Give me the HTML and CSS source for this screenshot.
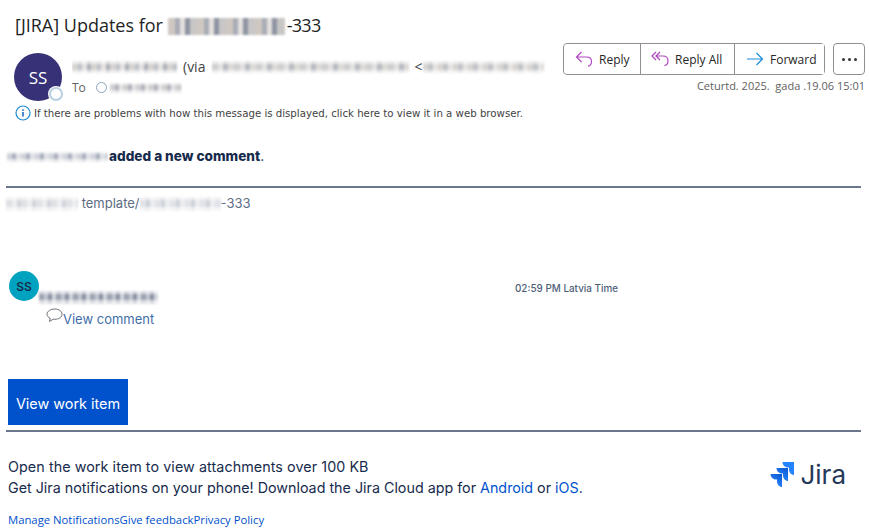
FILE: index.html
```html
<!DOCTYPE html>
<html lang="en">
<head>
<meta charset="utf-8">
<title>[JIRA] Updates</title>
<link rel="stylesheet" href="styles.css">
</head>
<body>
<header class="msg-head">
  <h1 class="subject">[JIRA] Updates for <span class="mask mask-subject"></span><span class="num">-333</span></h1>
  <div class="head-row">
    <div class="avatar-wrap">
      <div class="avatar">SS</div>
      <span class="presence"></span>
    </div>
    <div class="people">
      <div class="from"><span class="mask mask-from"></span><span class="via">(via</span><span class="mask mask-via"></span><span class="lt">&lt;</span><span class="mask mask-addr"></span></div>
      <div class="to">To <span class="to-dot"></span><span class="mask mask-to"></span></div>
    </div>
    <div class="actions">
      <div class="action-top">
        <div class="btn-group">
          <button class="act act-reply">
            <svg width="18" height="18" viewBox="0 0 18 18" fill="none" stroke="#b146c2" stroke-width="1.200"><path d="M6.500 2 1.500 7 6.500 12M1.500 7H11.500C14.500 7 16.500 9 16.500 11.700C16.500 13.700 15 15.700 13 16.200"/></svg>
            Reply</button>
          <button class="act act-all">
            <svg width="18" height="18" viewBox="0 0 18 18" fill="none" stroke="#b146c2" stroke-width="1.200"><path d="M5 2 1 6 5 10M9 2 5 6 9 10M5 6H12C15 6 17 8 17 11C17 13 15.500 15.200 13.500 15.700"/></svg>
            Reply All</button>
          <button class="act act-fwd">
            <svg width="18" height="18" viewBox="0 0 18 18" fill="none" stroke="#1b8bd6" stroke-width="1.200"><path d="M1 9H16.500M10.500 3 16.500 9 10.500 15"/></svg>
            Forward</button>
        </div>
        <button class="more" aria-label="More"><span></span><span></span><span></span></button>
      </div>
      <div class="date">Ceturtd. 2025.&nbsp; gada .19.06 15:01</div>
    </div>
  </div>
  <div class="infobar">
    <svg width="16" height="16" viewBox="0 0 16 16"><circle cx="8" cy="8" r="7" fill="none" stroke="#1b8bd6" stroke-width="1.200"/><rect x="7.200" y="7" width="1.600" height="4.500" fill="#1b6ec2"/><rect x="7.200" y="4.300" width="1.600" height="1.600" fill="#1b6ec2"/></svg>
    <span>If there are problems with how this message is displayed, click here to view it in a web browser.</span>
  </div>
</header>

<main class="mail">
  <p class="headline"><span class="mask mask-actor"></span><strong>added a new comment</strong>.</p>
  <hr class="rule">
  <p class="crumb"><span class="mask mask-project"></span> template/<span class="mask mask-key"></span>-333</p>

  <section class="comment">
    <div class="c-avatar">SS</div>
    <div class="c-time">02:59 PM Latvia Time</div>
    <div class="mask mask-name"></div>
    <a class="c-link" href="#">
      <svg class="c-icon" width="17" height="15" viewBox="0 0 17 15" fill="none" stroke="#6b6f76" stroke-width="1"><path d="M8.800 1C4.500 1 1 3.300 1 6.200C1 8 2.300 9.500 4.200 10.300L3.500 13.500L7.200 11.200C7.700 11.300 8.300 11.300 8.800 11.300C13 11.300 16 9 16 6.200C16 3.300 13 1 8.800 1Z"/></svg>View comment</a>
  </section>

  <a class="cta" href="#">View work item</a>
  <hr class="rule rule-low">

  <footer class="foot">
    <div class="foot-row">
      <div class="foot-text">
        <p class="foot-first">Open the work item to view attachments over 100 KB</p>
        <p>Get Jira notifications on your phone! Download the Jira Cloud app for <a href="#">Android</a> or <a href="#">iOS</a>.</p>
      </div>
      <div class="logo">
        <svg width="26" height="26" viewBox="0 0 26 26">
          <defs><linearGradient id="g" x1="1" y1="0" x2="0.400" y2="1"><stop offset="0" stop-color="#0a55d0"/><stop offset="1" stop-color="#2c8cff"/></linearGradient></defs>
          <path d="M25 1H13.500C13.500 4 16 6.500 19 6.500H20V8.500C20 11.500 22.500 14 25 14Z" fill="#2684ff"/>
          <path d="M19 7H7.500C7.500 10 10 12.500 13 12.500H14V14.500C14 17.500 16.500 20 19 20Z" fill="url(#g)"/>
          <path d="M13 13H1.500C1.500 16 4 18.500 7 18.500H8V20.500C8 23.500 10.500 26 13 26Z" fill="url(#g)"/>
        </svg>
        <span class="logo-word">Jira</span>
      </div>
    </div>
    <nav class="links"><a href="#">Manage Notifications</a><a href="#">Give feedback</a><a href="#">Privacy Policy</a></nav>
  </footer>
</main>
</body>
</html>
```
FILE: styles.css
```css
* { box-sizing: border-box; }
html, body { margin: 0; padding: 0; }
body { width: 869px; height: 530px; overflow: hidden; background: #fff; color: #172b4d; font-family: "Inter", "Liberation Sans", sans-serif; }
p { margin: 0; }
a { text-decoration: none; }

.mask { display: inline-block; vertical-align: middle; filter: blur(0.8px); background-image: linear-gradient(180deg, rgba(255,255,255,.6) 0 22%, transparent 22% 72%, rgba(255,255,255,.65) 72% 100%), var(--stripes); }
.mask-subject { width: 117px; height: 17px; margin-right: 1px; --stripes: repeating-linear-gradient(90deg, #cfc8c2 0 7px, #a9adb6 7px 12px, #e3e0dd 12px 17px, #8f95a3 17px 22px, #c8c6c6 22px 29px); background-image: var(--stripes); }
.mask-from { width: 105px; height: 12px; --stripes: repeating-linear-gradient(90deg, #d6d3d1 0 6px, #bfc3c9 6px 10px, #e5e3e2 10px 15px, #aeb2ba 15px 19px); }
.mask-via { width: 197px; height: 12px; margin-left: 7px; --stripes: repeating-linear-gradient(90deg, #cfcfd0 0 6px, #e3e2e1 6px 11px, #b9bcc2 11px 16px, #dcdad7 16px 22px); }
.mask-addr { width: 121px; height: 12px; margin-left: 1px; --stripes: repeating-linear-gradient(90deg, #d8d5d2 0 5px, #c2c4c8 5px 10px, #e6e4e3 10px 15px); }
.mask-to { width: 71px; height: 10px; --stripes: repeating-linear-gradient(90deg, #cfced0 0 5px, #b0b2ba 5px 9px, #e4e3e4 9px 13px); }
.mask-actor { width: 101px; height: 10px; margin-right: 1px; --stripes: repeating-linear-gradient(90deg, #cfd2d9 0 5px, #a9afbd 5px 9px, #dfe1e6 9px 14px); }
.mask-project { width: 72px; height: 14px; --stripes: repeating-linear-gradient(90deg, #dfe1e5 0 6px, #eceef0 6px 11px, #d2d6dc 11px 15px); }
.mask-key { width: 81px; height: 14px; --stripes: repeating-linear-gradient(90deg, #e1e3e8 0 6px, #cfd3da 6px 10px, #ebedf0 10px 15px); }
.mask-name { width: 119px; height: 13px; --stripes: repeating-linear-gradient(90deg, #9ea3b2 0 5px, #c3c6d0 5px 9px, #8d93a5 9px 13px, #d2d4db 13px 17px); }

.msg-head { padding: 15px 4px 0 14px; font-family: "Open Sans", "Noto Sans", sans-serif; color: #262626; }
.subject { margin: 0 0 8px 1px; font-size: 18px; font-weight: 400; line-height: 20px; color: #1f1f1f; }
.subject .mask { vertical-align: -3px; }
.num { letter-spacing: -0.7px; margin-left: 1px; }
.head-row { display: flex; align-items: flex-start; }
.avatar-wrap { position: relative; width: 48px; height: 48px; margin-top: 10px; flex: none; }
.avatar { width: 48px; height: 48px; border-radius: 50%; background: #373277; color: #fff; display: flex; align-items: center; justify-content: center; font-size: 17px; }
.presence { position: absolute; right: -1px; bottom: 0; width: 14px; height: 14px; border-radius: 50%; background: #fff; border: 2px solid #b9cfe0; box-shadow: 0 0 0 1px #fff; }
.people { width: 491px; margin: 14px 0 0 10px; }
.from { display: flex; align-items: center; font-size: 14px; line-height: 19px; color: #424242; white-space: nowrap; overflow: hidden; }
.via { margin-left: 6px; }
.lt { margin-left: 5px; }
.to { font-size: 12px; line-height: 17px; margin-top: 3px; color: #616161; display: flex; align-items: center; }
.to-dot { width: 11px; height: 11px; border: 1px solid #8fa4bb; border-radius: 50%; margin: 0 0 0 10px; }
.mask-to { margin-left: 3px; }
.actions { flex: none; width: 302px; }
.action-top { display: flex; gap: 8px; }
.btn-group { display: flex; border: 1px solid #8f8f8f; border-radius: 4px; height: 32px; }
.act { display: flex; align-items: center; gap: 6px; height: 30px; padding: 0 0 0 11px; background: #fff; border: 0; border-left: 1px solid #8f8f8f; border-radius: 4px 0 0 4px; font: 12px "Open Sans", sans-serif; color: #262626; white-space: nowrap; }
.act:first-child { border-left: 0; }
.act + .act { border-radius: 0; }
.act-reply { width: 76px; }
.act-all { width: 94px; padding-left: 10px; }
.act-fwd { width: 90px; }
.more { display: flex; align-items: center; justify-content: center; gap: 3px; width: 32px; height: 32px; padding: 0; background: #fff; border: 1px solid #8f8f8f; border-radius: 4px; }
.more span { width: 3px; height: 3px; background: #333; border-radius: 50%; }
.date { margin-top: 3px; text-align: right; font-size: 11px; line-height: 16px; color: #616161; }
.infobar { display: flex; align-items: center; gap: 3px; height: 16px; margin-top: 4px; margin-left: 1px; font-family: "DejaVu Sans", sans-serif; font-size: 10.200px; color: #424242; }

.mail { padding: 0 8px 0 6px; }
.headline { margin-top: 25px; font-size: 13.600px; line-height: 20px; color: #172b4d; }
.headline .mask { margin-left: 1px; }
.headline strong { font-weight: 800; }
.rule { margin: 0; height: 2px; border: 0; background: #6b778c; }
.headline + .rule { margin-top: 20px; }
.crumb { margin-top: 6px; font-size: 13px; line-height: 18px; color: #5e6c84; }
.comment { display: grid; grid-template-columns: 506px 1fr; grid-template-rows: 30px auto; margin: 59px 0 0 3px; height: 107px; font-size: 13px; }
.c-avatar { width: 30px; height: 30px; border-radius: 50%; background: #00a3bf; color: #172b4d; display: flex; align-items: center; justify-content: center; font-size: 12px; font-weight: 600; grid-row: 1; grid-column: 1; }
.c-time { grid-column: 2; grid-row: 1; font-size: 9.900px; line-height: 14px; margin-top: 10px; color: #505f79; white-space: nowrap; font-weight: 500; }
.mask-name { grid-column: 1; grid-row: 1 / span 2; margin: 20px 0 0 30px; }
.c-link { grid-column: 1; grid-row: 2; display: flex; align-items: flex-start; margin: 8px 0 0 37px; padding-top: 0; font-size: 13px; line-height: 20px; color: #3f6ea8; }
.c-icon { margin-top: -1px; flex: none; }
.cta { display: block; width: 120px; height: 46px; margin-left: 2px; margin-top: 1px; background: #0052cc; color: #fff; font-size: 14.400px; line-height: 50px; text-align: center; }
.rule-low { margin-top: 5px; }
.foot { padding: 0 0 0 2px; }
.foot-row { display: flex; justify-content: space-between; margin-top: 24px; }
.foot-text { font-size: 14.300px; line-height: 21px; color: #172b4d; }
.foot-first { letter-spacing: 0.08px; }
.foot-text a { color: #0052cc; }
.logo { display: flex; align-items: center; gap: 5px; margin: 4px 15px 0 0; height: 28px; font-size: 26px; color: #253858; }
.links { margin-top: 14px; font-family: "Open Sans", sans-serif; font-size: 11.300px; line-height: 16px; }
.links a { color: #0052cc; }
```
